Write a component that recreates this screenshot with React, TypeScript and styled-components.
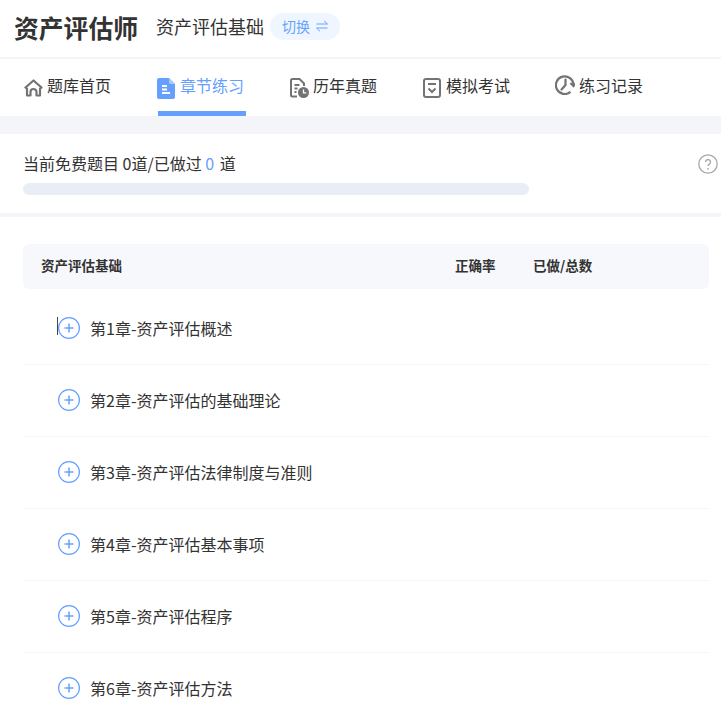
import React from 'react';
import styled, { createGlobalStyle } from 'styled-components';

const GlobalStyle = createGlobalStyle`
  html, body {
    margin: 0;
    padding: 0;
    height: 100%;
    overflow: hidden;
    background: #fff;
  }
  body {
    font-family: "Noto Sans CJK SC", "Liberation Sans", sans-serif;
    color: #333;
  }
`;

const Page = styled.div`
  height: 100vh;
  overflow: hidden;
  background: #fff;
`;

const Header = styled.header`
  height: 59px;
  box-sizing: border-box;
  display: flex;
  align-items: center;
  padding: 0 14px 4px;
  border-bottom: 2px solid #f4f5f9;
`;

const BrandTitle = styled.h1`
  margin: 0;
  font-size: 24.8px;
  line-height: 30px;
  font-weight: 700;
  color: #333;
`;

const SubjectName = styled.span`
  margin: 0 0 2px 18px;
  font-size: 18px;
  line-height: 26px;
  color: #333;
`;

const SwitchBadge = styled.button`
  margin-left: 6px;
  width: 70px;
  height: 27px;
  padding: 0 0 2px 12px;
  display: flex;
  align-items: center;
  gap: 6px;
  border: none;
  border-radius: 14px;
  background: #eff6ff;
  color: #66a3ff;
  font: inherit;
  font-size: 14px;
`;

const Nav = styled.nav`
  height: 57px;
  display: flex;
  padding-left: 23px;
  gap: 45px;
`;

const NavItem = styled.a<{ $active?: boolean }>`
  position: relative;
  width: 88px;
  height: 52px;
  display: flex;
  align-items: center;
  font-size: 16px;
  white-space: nowrap;
  color: ${p => (p.$active ? '#66a0ff' : '#333')};

  ${p =>
    p.$active &&
    `
    &::after {
      content: '';
      position: absolute;
      left: 2px;
      bottom: -5px;
      width: 88px;
      height: 5px;
      background: #66a0ff;
    }
  `}
`;

const NavGlyph = styled.span<{ $shift?: number }>`
  flex: none;
  width: 24px;
  box-sizing: border-box;
  padding: 6px 0 0 ${p => p.$shift ?? 1}px;
`;

const GraySpacer = styled.div<{ $height: number }>`
  height: ${p => p.$height}px;
  background: #f4f5f9;
`;

const ProgressSection = styled.section`
  position: relative;
  height: 79px;
  padding: 17px 23px 0;
  box-sizing: border-box;
`;

const ProgressText = styled.div`
  font-size: 16px;
  line-height: 24px;
  color: #333;
`;

const Highlight = styled.span`
  padding-right: 2px;
  color: #66a0ff;
`;

const ProgressTrack = styled.div`
  margin-top: 8px;
  width: 506px;
  height: 12px;
  border-radius: 6px;
  background: #e9edf5;
`;

const HelpIcon = styled.div`
  position: absolute;
  top: 20px;
  right: 3px;
  width: 20px;
  height: 20px;
`;

const TableWrap = styled.div`
  padding: 27px 12px 0 23px;
`;

const TableHead = styled.div`
  height: 45px;
  box-sizing: border-box;
  margin-bottom: 4px;
  display: flex;
  align-items: center;
  padding: 0 0 4px 18px;
  border-radius: 6px;
  background: #f7f8fc;
  font-size: 13.5px;
  font-weight: 700;
  color: #333;
`;

const HeadName = styled.span`
  width: 414px;
`;

const HeadRate = styled.span`
  width: 78px;
`;

const ChapterRow = styled.div`
  position: relative;
  height: 72px;
  box-sizing: border-box;
  display: flex;
  align-items: center;
  gap: 10px;
  padding: 0 0 2px 35px;
  border-bottom: 1px solid #f5f6f9;
  font-size: 16px;
  color: #333;
`;

const TextCursor = styled.i`
  position: absolute;
  left: 34px;
  top: 24px;
  width: 1px;
  height: 18px;
  background: #444;
`;

const Icon = styled.svg`
  flex: none;
  display: block;
`;

const HomeIcon = () => (
  <Icon width="19" height="18" viewBox="0 0 19 18" fill="none" stroke="#737373" strokeWidth="2.2" strokeLinejoin="round">
    <path d="M1.500 8.500 9.500 1.500l8 7-1.500 1.200V16.500h-3.500v-3.500a3 3 0 0 0-6 0v3.500H3V9.700z" />
  </Icon>
);

const DocIcon = () => (
  <Icon width="18" height="21" viewBox="0 0 18 21">
    <path d="M2 0h10l6 6v13a2 2 0 0 1-2 2H2a2 2 0 0 1-2-2V2a2 2 0 0 1 2-2z" fill="#66a0ff" />
    <path d="M12 0l6 6h-4.500A1.500 1.500 0 0 1 12 4.500z" fill="#a9c9ff" />
    <path d="M5 8h5M5 11.500h5M5 15h8" stroke="#fff" strokeWidth="1.800" />
  </Icon>
);

const PaperClockIcon = () => (
  <Icon width="19" height="20" viewBox="0 0 19 20" fill="none" stroke="#737373" strokeWidth="2">
    <path d="M7 18.500H2.500A1.500 1.500 0 0 1 1 17V2.500A1.500 1.500 0 0 1 2.500 1h7l4.500 4.500V8" strokeLinejoin="round" />
    <path d="M4.500 7h5M4.500 10.500h3M4.500 14h2" />
    <circle cx="13.500" cy="14.500" r="5.500" fill="#737373" stroke="none" />
    <path d="M13.500 11.500v3.300h2.800" stroke="#fff" strokeWidth="1.300" />
  </Icon>
);

const ExamIcon = () => (
  <Icon width="18" height="20" viewBox="0 0 18 20" fill="none" stroke="#737373" strokeWidth="2">
    <rect x="1" y="1" width="16" height="18" rx="2" />
    <path d="M5 6h8" />
    <path d="m5.500 10.500 3.500 3.500 3.500-3.500" />
  </Icon>
);

const RecordIcon = () => (
  <Icon width="20" height="20" viewBox="0 0 20 20" fill="none" stroke="#737373" strokeWidth="2.2">
    <path d="M15.500 16.800A8.800 8.800 0 1 1 18.500 10" />
    <path d="m15.500 8 3 3 1.500-2.500" />
    <path d="M10.500 4.500V10l-4 4.500" strokeLinecap="round" />
  </Icon>
);

const SwapIcon = () => (
  <Icon width="12" height="12" viewBox="0 0 12 12" fill="none" stroke="#66a3ff" strokeWidth="1">
    <path d="M.5 4h11L8 .8" />
    <path d="M11.500 8H.5L4 11.200" />
  </Icon>
);

const PlusCircle = () => (
  <Icon width="22" height="22" viewBox="0 0 22 22" fill="none" stroke="#66a0ff">
    <circle cx="11" cy="11" r="10.400" strokeWidth="1.200" />
    <path d="M11 6.500v9M6.500 11h9" strokeWidth="1.500" />
  </Icon>
);

const navItems = [
  { label: '题库首页', icon: <HomeIcon /> },
  { label: '章节练习', icon: <DocIcon />, active: true },
  { label: '历年真题', icon: <PaperClockIcon /> },
  { label: '模拟考试', icon: <ExamIcon /> },
  { label: '练习记录', icon: <RecordIcon />, shift: -1 },
];

const chapters = [
  '第1章-资产评估概述',
  '第2章-资产评估的基础理论',
  '第3章-资产评估法律制度与准则',
  '第4章-资产评估基本事项',
  '第5章-资产评估程序',
  '第6章-资产评估方法',
];

const App: React.FC = () => (
  <Page>
    <GlobalStyle />
    <Header>
      <BrandTitle>资产评估师</BrandTitle>
      <SubjectName>资产评估基础</SubjectName>
      <SwitchBadge>
        切换
        <SwapIcon />
      </SwitchBadge>
    </Header>

    <Nav>
      {navItems.map(item => (
        <NavItem key={item.label} $active={item.active}>
          <NavGlyph $shift={item.shift}>{item.icon}</NavGlyph>
          {item.label}
        </NavItem>
      ))}
    </Nav>
    <GraySpacer $height={18} />

    <ProgressSection>
      <ProgressText>
        当前免费题目 0道/已做过 <Highlight>0</Highlight> 道
      </ProgressText>
      <ProgressTrack />
      <HelpIcon>
        <Icon width="20" height="20" viewBox="0 0 20 20" fill="none" stroke="#a8a8a8">
          <circle cx="10" cy="10" r="9.200" strokeWidth="1.300" />
          <path d="M7.500 8a2.500 2.500 0 1 1 3.800 2.100c-.9.600-1.300 1-1.300 2" strokeWidth="1.400" />
          <path d="M10 14v1.500" strokeWidth="1.500" />
        </Icon>
      </HelpIcon>
    </ProgressSection>
    <GraySpacer $height={4} />

    <TableWrap>
      <TableHead>
        <HeadName>资产评估基础</HeadName>
        <HeadRate>正确率</HeadRate>
        <span>已做/总数</span>
      </TableHead>
      {chapters.map((name, i) => (
        <ChapterRow key={name}>
          {i === 0 && <TextCursor />}
          <PlusCircle />
          {name}
        </ChapterRow>
      ))}
    </TableWrap>
  </Page>
);

export default App;
